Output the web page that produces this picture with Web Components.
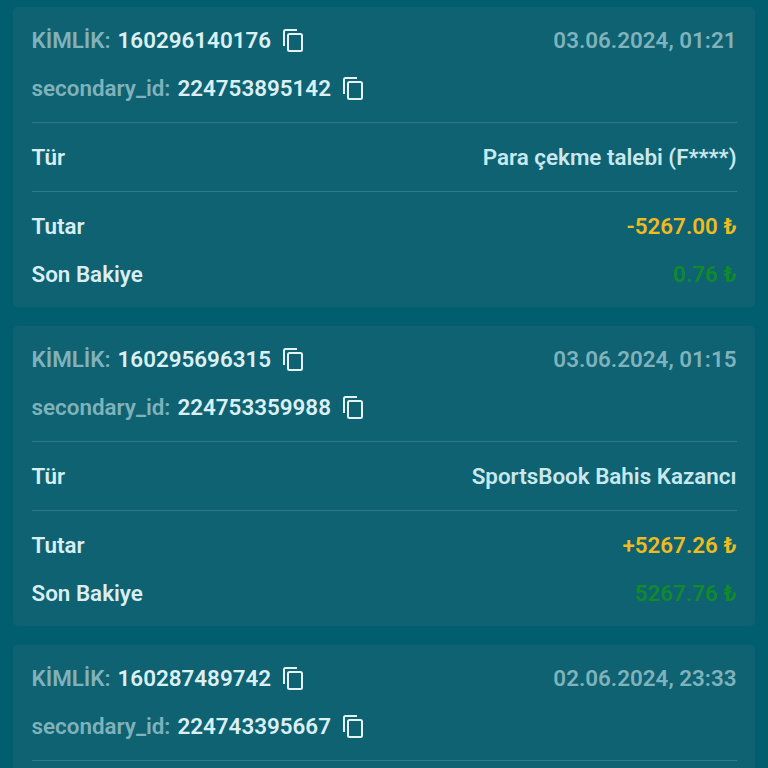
<!DOCTYPE html>
<html><head><meta charset="utf-8">
<style>
html,body{margin:0;padding:0;height:768px;overflow:hidden;background:#005e6f;}
body{font-family:Roboto,"Liberation Sans",sans-serif;}
tx-list{padding:7px 13px 0;}
</style></head><body>
<template id="card-t"><style>
:host{display:block;background:#0e6272;border-radius:5px;padding:9px 18.5px 9px;color:#cfe9ee;font-weight:600;font-size:22.4px;flex:none;}
.row{display:flex;align-items:center;justify-content:space-between;height:48px;white-space:nowrap;}
.ids{display:flex;align-items:center;}
.k{color:#80b2bb;margin-right:7px;}
.v{color:#dcf0f4;}
svg{display:block;margin-left:10px;width:24px;height:24px;fill:none;stroke:#e6f3f5;stroke-width:2;}
.date{color:#80b2bb;}
hr{border:0;height:1px;background:#2c7c8a;margin:10px 0;}
.y{color:#f0bb1c;}.g{color:#118a2c;}
.lab{color:#d9eef2;}.val{color:#c9e8ee;}
</style>
<div class="row"><div class="ids"><span class="k">KİMLİK:</span><span class="v" id="id1"></span><svg viewBox="0 0 24 24"><path d="M3 18V3.500A1.500 1.500 0 0 1 4.500 2H16"/><rect x="7" y="6" width="14" height="17" rx="1.500"/></svg></div><span class="date" id="date"></span></div>
<div class="row"><div class="ids"><span class="k">secondary_id:</span><span class="v" id="id2"></span><svg viewBox="0 0 24 24"><path d="M3 18V3.500A1.500 1.500 0 0 1 4.500 2H16"/><rect x="7" y="6" width="14" height="17" rx="1.500"/></svg></div></div>
<hr>
<div id="rest">
<div class="row"><span class="lab">Tür</span><span class="val" id="type"></span></div>
<hr>
<div class="row"><span class="lab">Tutar</span><span class="y" id="amt"></span></div>
<div class="row"><span class="lab">Son Bakiye</span><span class="g" id="bal"></span></div>
</div>
</template>
<template id="list-t"><style>
:host{display:flex;flex-direction:column;gap:19px;}
</style><slot></slot></template>
<tx-list>
<tx-card id1="160296140176" id2="224753895142" date="03.06.2024, 01:21" type="Para çekme talebi (F****)" amt="-5267.00 ₺" bal="0.76 ₺"></tx-card>
<tx-card id1="160295696315" id2="224753359988" date="03.06.2024, 01:15" type="SportsBook Bahis Kazancı" amt="+5267.26 ₺" bal="5267.76 ₺"></tx-card>
<tx-card id1="160287489742" id2="224743395667" date="02.06.2024, 23:33"></tx-card>
</tx-list>
<script>
class TxList extends HTMLElement{constructor(){super();this.attachShadow({mode:'open'}).append(document.getElementById('list-t').content.cloneNode(true));}}
class TxCard extends HTMLElement{constructor(){super();this.attachShadow({mode:'open'}).append(document.getElementById('card-t').content.cloneNode(true));}
connectedCallback(){const r=this.shadowRoot;
if(!this.hasAttribute('type'))r.getElementById('rest').remove();
for(const k of['id1','id2','date','type','amt','bal']){const e=r.getElementById(k);if(e)e.textContent=this.getAttribute(k)||'';}}}
customElements.define('tx-list',TxList);customElements.define('tx-card',TxCard);
</script>
</body></html>
